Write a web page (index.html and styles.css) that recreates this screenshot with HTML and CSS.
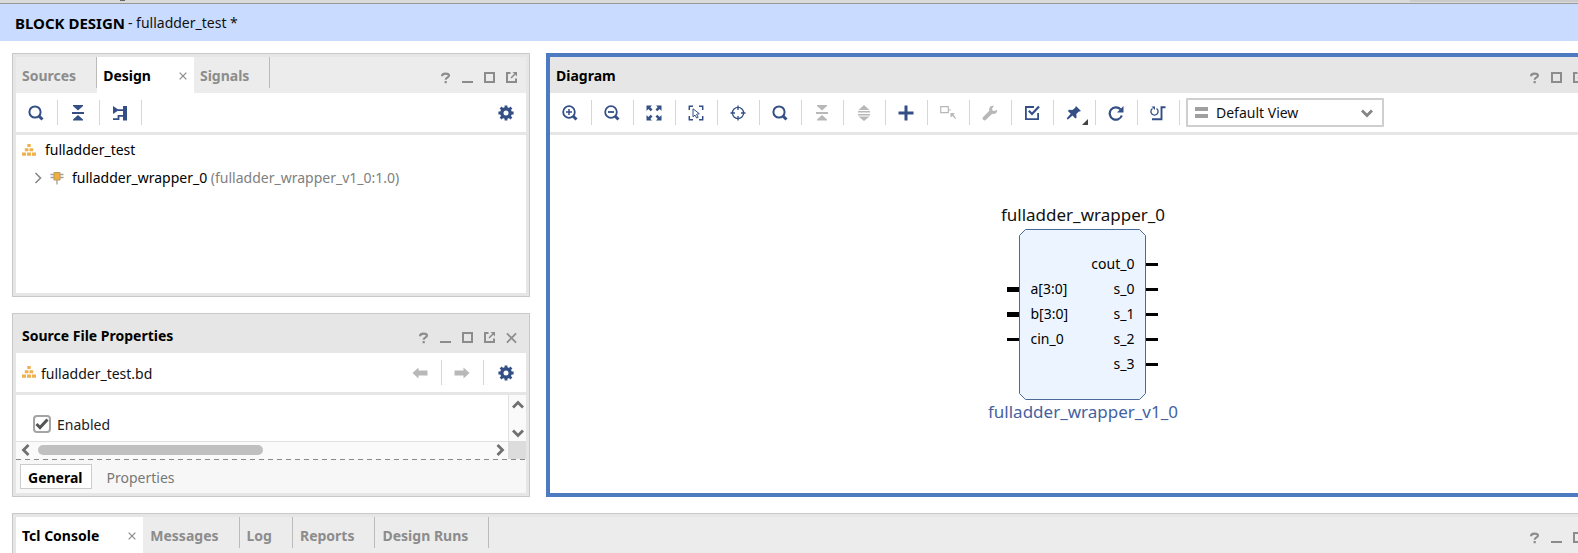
FILE: index.html
```html
<!DOCTYPE html>
<html lang="en">
<head>
<meta charset="utf-8">
<title>Block Design - fulladder_test</title>
<link rel="stylesheet" href="styles.css">
</head>
<body>
<svg class="defs" aria-hidden="true">
  <symbol id="i-help" viewBox="0 0 12 12"><path d="M2.200 4C2.200 1.800 4 1.200 6 1.200s3.800.7 3.800 2.400C9.800 5.500 6.200 5.300 6.200 8" fill="none" stroke="currentColor" stroke-width="2.300"/><path d="M5 9.300h2.400v2.400H5z" fill="currentColor"/></symbol>
  <symbol id="i-min" viewBox="0 0 11 12"><path d="M0 9h11v2H0z" fill="currentColor"/></symbol>
  <symbol id="i-max" viewBox="0 0 11 12"><path d="M1 1h9v9H1z" fill="none" stroke="currentColor" stroke-width="2"/></symbol>
  <symbol id="i-pop" viewBox="0 0 11 12"><path d="M4.500 1H1v9h9V6.500" fill="none" stroke="currentColor" stroke-width="2"/><path d="M5 6 9 2" stroke="currentColor" stroke-width="1.600"/><path d="M6.500 0H11V4.500z" fill="currentColor"/></symbol>
  <symbol id="i-close" viewBox="0 0 12 12"><path d="M1 1l10 10M11 1 1 11" fill="none" stroke="currentColor" stroke-width="1.900"/></symbol>
  <symbol id="i-search" viewBox="0 0 16 16"><circle cx="7" cy="7" r="5.600" fill="none" stroke="currentColor" stroke-width="2"/><path d="M11.200 11.200 14.500 14.500" stroke="currentColor" stroke-width="3"/></symbol>
  <symbol id="i-zin" viewBox="0 0 16 16"><circle cx="7" cy="7" r="5.800" fill="none" stroke="currentColor" stroke-width="1.800"/><path d="M11.200 11.200 14.500 14.500" stroke="currentColor" stroke-width="3"/><path d="M7 4v6M4 7h6" stroke="currentColor" stroke-width="1.500"/></symbol>
  <symbol id="i-zout" viewBox="0 0 16 16"><circle cx="7" cy="7" r="5.800" fill="none" stroke="currentColor" stroke-width="1.800"/><path d="M11.200 11.200 14.500 14.500" stroke="currentColor" stroke-width="3"/><path d="M4 7h6" stroke="currentColor" stroke-width="1.800"/></symbol>
  <symbol id="i-collapse" viewBox="0 0 16 16"><path d="M3 0h10v1L8 5.500 3 1zM2 7h12v2H2zM3 15.500v-1l5-4.500 5 4.500v1z" fill="currentColor"/></symbol>
  <symbol id="i-expand" viewBox="0 0 16 16"><path d="M8 0 13.500 5h-11zM2 6h12v1.600H2zM2 9h12v1.600H2zM2.500 11.500h11L8 16z" fill="currentColor"/></symbol>
  <symbol id="i-hier" viewBox="0 0 16 16"><path d="M1 1l6 4-6 4z" fill="currentColor"/><path d="M6 5.200h5M1 14.200h5.500v-3.400H11" fill="none" stroke="currentColor" stroke-width="1.800"/><path d="M11 1h4v14.500h-4z" fill="currentColor"/></symbol>
  <symbol id="i-gear" viewBox="0 0 16 16"><circle cx="8" cy="8" r="4.200" fill="none" stroke="currentColor" stroke-width="3.400"/><path d="M8 .4v3M8 12.600v3M.4 8h3M12.600 8h3M2.600 2.600l2 2M11.400 11.400l2 2M2.600 13.400l2-2M11.400 4.600l2-2" stroke="currentColor" stroke-width="2.800"/></symbol>
  <symbol id="i-fit" viewBox="0 0 16 16"><path d="M.5.5H6L4.300 2.300l2.200 2.200-1.800 1.800-2.300-2.200L.5 6zM15.500.5V6l-1.900-1.900-2.300 2.200-1.800-1.800 2.200-2.200L10 .5zM.5 15.500V10l1.900 1.900 2.300-2.200 1.800 1.800-2.200 2.200L6 15.500zM15.500 15.500H10l1.700-1.800-2.200-2.200 1.800-1.800 2.300 2.200 1.900-1.900z" fill="currentColor"/></symbol>
  <symbol id="i-area" viewBox="0 0 16 16"><path d="M1.300 5V1.300H5M11 1.300h3.700V5M1.300 11v3.700H5M11 14.700h3.700V11" fill="none" stroke="currentColor" stroke-width="1.500"/><path d="M5 3.800v8l2-1.700 1.700 3 1.500-.8-1.600-3 2.700-.6z" fill="none" stroke="currentColor" stroke-width="1"/></symbol>
  <symbol id="i-target" viewBox="0 0 16 16"><circle cx="8" cy="8" r="5.600" fill="none" stroke="currentColor" stroke-width="1.300"/><path d="M8 .5v4.500M8 11v4.500M.5 8h4.500M11 8h4.500" stroke="currentColor" stroke-width="1.300"/></symbol>
  <symbol id="i-plus" viewBox="0 0 16 16"><path d="M6.500.5h3v6h6v3h-6v6h-3v-6h-6v-3h6z" fill="currentColor"/></symbol>
  <symbol id="i-conn" viewBox="0 0 16 16"><path d="M.7 1.700h7.600v6H.7zM8.300 5H11" fill="none" stroke="currentColor" stroke-width="1.200"/><path d="M10.500 8h4.500l-1.500 1.500 2.300 3.500v1.500l-3.300-3.500-2 1.500z" fill="currentColor"/></symbol>
  <symbol id="i-wrench" viewBox="0 0 16 16"><path d="M15 4.800 12.600 6 10.500 5.500 10 3.500 12 1C9.500-.2 6.300 2 7.300 5.800L.9 12.200c-1.400 1.600 1.200 4.200 2.800 2.800l6.500-6.300c3 .9 5.500-1.200 4.800-3.900z" fill="currentColor"/></symbol>
  <symbol id="i-valid" viewBox="0 0 16 16"><path d="M10 2H1.900v12.200h12.200V8" fill="none" stroke="currentColor" stroke-width="1.800"/><path d="M4.800 5.800 8 9 15 1.500" fill="none" stroke="currentColor" stroke-width="2.200"/></symbol>
  <symbol id="i-pin" viewBox="0 0 16 16"><path d="M10 1l5 5-1.300.6-.8-.2-2.600 2.600.3 3.500-1.200 1-2.900-2.900-4.600 3.900-.9-.4-.2-.8 3.900-4.600L1.900 5.900l1-1.200 3.500.3L9 2.900z" fill="currentColor"/></symbol>
  <symbol id="i-refresh" viewBox="0 0 16 16"><path d="M12.500 4.300A6.200 6.200 0 1 0 13.800 10.500" fill="none" stroke="currentColor" stroke-width="2.200"/><path d="M15.500 1v6.500H9z" fill="currentColor"/></symbol>
  <symbol id="i-regen" viewBox="0 0 16 16"><path d="M6.500 3.500A3.600 3.600 0 1 1 2.500 3.500" fill="none" stroke="currentColor" stroke-width="1.300"/><path d="M1.500 1.500H5v3.500z" fill="currentColor"/><path d="M2 14.200h9.500V2.200H15.500" fill="none" stroke="currentColor" stroke-width="1.900"/></symbol>
  <symbol id="i-left" viewBox="0 0 16 16"><path d="M.5 8 6.500 2.500V5.500h9v5h-9v3z" fill="currentColor"/></symbol>
  <symbol id="i-right" viewBox="0 0 16 16"><path d="M15.500 8 9.500 2.500V5.500h-9v5h9v3z" fill="currentColor"/></symbol>
  <symbol id="i-design" viewBox="0 0 14 12"><path d="M5.300 0h3.400v3H5.300zM2.800 4.300h3.700v3H2.800zM7.500 4.300h3.700v3H7.500zM0 8.500h4v3.200H0zM5 8.500h4v3.200H5zM10 8.500h4v3.200h-4z" fill="currentColor"/></symbol>
  <symbol id="i-chip" viewBox="0 0 14 14"><path d="M.5 3.500h13M.5 6.500h13M7 9v4.500" stroke="#a0a0a0" stroke-width="1.300"/><path d="M4 1.500h6v7.500H4z" fill="#f3af35" stroke="#b59a66"/></symbol>
  <symbol id="i-chev" viewBox="0 0 14 14"><path d="M2 4.500l5 5 5-5" fill="none" stroke="currentColor" stroke-width="2.800"/></symbol>
</svg>

<div class="strip"><span class="strip-mark"></span><span class="strip-end"></span></div>
<header class="title-bar"><h1>BLOCK DESIGN</h1><span>- fulladder_test *</span></header>

<main class="workspace">
  <div class="side">
    <section class="panel panel-design">
      <div class="panel-head tabs-head">
        <div class="tabs" role="tablist">
          <button class="tab" role="tab">Sources</button>
          <div class="tab-on"><button class="tab-label" role="tab" aria-selected="true">Design</button><button class="tab-x" aria-label="Close"><svg><use href="#i-close"/></svg></button></div>
          <button class="tab" role="tab">Signals</button>
        </div>
        <div class="win-tools">
          <button aria-label="Help"><svg><use href="#i-help"/></svg></button>
          <button aria-label="Minimize"><svg><use href="#i-min"/></svg></button>
          <button aria-label="Maximize"><svg><use href="#i-max"/></svg></button>
          <button aria-label="Float"><svg><use href="#i-pop"/></svg></button>
        </div>
      </div>
      <div class="toolbar">
        <button class="tool" aria-label="Search"><svg><use href="#i-search"/></svg></button>
        <button class="tool" aria-label="Collapse all"><svg><use href="#i-collapse"/></svg></button>
        <button class="tool" aria-label="Hierarchy"><svg><use href="#i-hier"/></svg></button>
        <span class="grow"></span>
        <button class="tool last" aria-label="Settings"><svg><use href="#i-gear"/></svg></button>
      </div>
      <ul class="tree">
        <li class="tree-row"><svg class="design-icon"><use href="#i-design"/></svg><span>fulladder_test</span></li>
        <li class="tree-row child"><svg class="twist" viewBox="0 0 8 12"><path d="M1.500 1 6.500 6 1.500 11" fill="none" stroke="currentColor" stroke-width="1.600"/></svg><svg class="chip-icon"><use href="#i-chip"/></svg><span>fulladder_wrapper_0 <span class="muted">(fulladder_wrapper_v1_0:1.0)</span></span></li>
      </ul>
    </section>

    <section class="panel panel-props">
      <div class="panel-head">
        <h2>Source File Properties</h2>
        <div class="win-tools">
          <button aria-label="Help"><svg><use href="#i-help"/></svg></button>
          <button aria-label="Minimize"><svg><use href="#i-min"/></svg></button>
          <button aria-label="Maximize"><svg><use href="#i-max"/></svg></button>
          <button aria-label="Float"><svg><use href="#i-pop"/></svg></button>
          <button aria-label="Close"><svg><use href="#i-close"/></svg></button>
        </div>
      </div>
      <div class="toolbar">
        <div class="file-name"><svg class="design-icon"><use href="#i-design"/></svg><span>fulladder_test.bd</span></div>
        <span class="grow"></span>
        <button class="tool" aria-label="Back" disabled><svg><use href="#i-left"/></svg></button>
        <button class="tool" aria-label="Forward" disabled><svg><use href="#i-right"/></svg></button>
        <button class="tool last" aria-label="Settings"><svg><use href="#i-gear"/></svg></button>
      </div>
      <div class="scroll-area">
        <div class="props-body">
          <label class="check"><input type="checkbox" checked><svg viewBox="0 0 14 12"><path d="M1.500 6 5 9.500 12.500 1.500" fill="none" stroke="currentColor" stroke-width="3"/></svg><span>Enabled</span></label>
        </div>
        <div class="vbar"><button aria-label="Scroll up"><svg class="flip"><use href="#i-chev"/></svg></button><button aria-label="Scroll down"><svg><use href="#i-chev"/></svg></button></div>
        <div class="hbar"><button aria-label="Scroll left"><svg class="turn-left"><use href="#i-chev"/></svg></button><div class="track"><div class="thumb"></div></div><button aria-label="Scroll right"><svg class="turn-right"><use href="#i-chev"/></svg></button></div>
        <div class="corner"></div>
      </div>
      <div class="foot-tabs"><button class="foot-tab on">General</button><button class="foot-tab">Properties</button></div>
    </section>
  </div>

  <section class="panel panel-diagram">
    <div class="panel-head">
      <h2>Diagram</h2>
      <div class="win-tools">
        <button aria-label="Help"><svg><use href="#i-help"/></svg></button>
        <button aria-label="Maximize"><svg><use href="#i-max"/></svg></button>
        <button aria-label="Float"><svg><use href="#i-pop"/></svg></button>
        <button aria-label="Close"><svg><use href="#i-close"/></svg></button>
      </div>
    </div>
    <div class="toolbar">
      <button class="tool" aria-label="Zoom in"><svg><use href="#i-zin"/></svg></button>
      <button class="tool" aria-label="Zoom out"><svg><use href="#i-zout"/></svg></button>
      <button class="tool" aria-label="Zoom fit"><svg><use href="#i-fit"/></svg></button>
      <button class="tool" aria-label="Select area"><svg><use href="#i-area"/></svg></button>
      <button class="tool" aria-label="Center"><svg><use href="#i-target"/></svg></button>
      <button class="tool" aria-label="Search"><svg><use href="#i-search"/></svg></button>
      <button class="tool" aria-label="Collapse all" disabled><svg><use href="#i-collapse"/></svg></button>
      <button class="tool" aria-label="Expand all" disabled><svg><use href="#i-expand"/></svg></button>
      <button class="tool" aria-label="Add IP"><svg><use href="#i-plus"/></svg></button>
      <button class="tool" aria-label="Make connection" disabled><svg><use href="#i-conn"/></svg></button>
      <button class="tool" aria-label="Customize" disabled><svg><use href="#i-wrench"/></svg></button>
      <button class="tool" aria-label="Validate design"><svg><use href="#i-valid"/></svg></button>
      <button class="tool has-menu" aria-label="Pin"><svg><use href="#i-pin"/></svg></button>
      <button class="tool" aria-label="Refresh"><svg><use href="#i-refresh"/></svg></button>
      <button class="tool" aria-label="Regenerate layout"><svg><use href="#i-regen"/></svg></button>
      <div class="view-pick">
        <svg class="view-bars" viewBox="0 0 13 12"><path d="M0 0h13v4H0zM0 7h13v4H0z" fill="currentColor"/></svg>
        <select aria-label="View"><option>Default View</option></select>
        <svg class="view-arrow"><use href="#i-chev"/></svg>
      </div>
    </div>
    <div class="canvas">
      <div class="node">
        <div class="node-name">fulladder_wrapper_0</div>
        <div class="node-box">
          <svg class="node-shape" viewBox="0 0 127 171"><path d="M6.500.5h114l6 6v158l-6 6H6.500l-6-6V6.500z" fill="#ecf5ff" stroke="#4a6a9c"/></svg>
          <ul class="ports in">
            <li class="bus">a[3:0]</li><li class="bus">b[3:0]</li><li>cin_0</li>
          </ul>
          <ul class="ports out">
            <li>cout_0</li><li>s_0</li><li>s_1</li><li>s_2</li><li>s_3</li>
          </ul>
        </div>
        <div class="node-type">fulladder_wrapper_v1_0</div>
      </div>
    </div>
  </section>

  <section class="panel panel-console">
    <div class="panel-head tabs-head">
      <div class="tabs" role="tablist">
        <div class="tab-on"><button class="tab-label" role="tab" aria-selected="true">Tcl Console</button><button class="tab-x" aria-label="Close"><svg><use href="#i-close"/></svg></button></div>
        <button class="tab" role="tab">Messages</button>
        <button class="tab" role="tab">Log</button>
        <button class="tab" role="tab">Reports</button>
        <button class="tab" role="tab">Design Runs</button>
      </div>
      <div class="win-tools">
        <button aria-label="Help"><svg><use href="#i-help"/></svg></button>
        <button aria-label="Minimize"><svg><use href="#i-min"/></svg></button>
        <button aria-label="Maximize"><svg><use href="#i-max"/></svg></button>
        <button aria-label="Float"><svg><use href="#i-pop"/></svg></button>
      </div>
    </div>
  </section>
</main>
</body>
</html>
```
FILE: styles.css
```css
* { box-sizing: border-box; }
body {
  margin: 0;
  min-height: 100vh;
  overflow: hidden;
  background: #fff;
  color: #111;
  font: 14px/20px "Noto Sans", "Open Sans", sans-serif;
}
h1, h2, ul { margin: 0; padding: 0; font-size: 14px; list-style: none; color: #000; }
button {
  border: 0;
  padding: 0;
  background: none;
  font: inherit;
  color: inherit;
}
svg { display: block; flex: none; }
.defs { position: absolute; width: 0; height: 0; }
.grow { flex: 1; }
.muted { color: #808080; }

.strip {
  display: flex;
  justify-content: space-between;
  height: 4px;
  padding-left: 120px;
  background: #dadada;
  border-bottom: 1px solid #999;
}
.strip-mark { width: 5px; height: 1px; background: #666; }
.strip-end { width: 168px; height: 2px; background: #cacaca; }
.title-bar {
  display: flex;
  align-items: center;
  gap: 3px;
  height: 37px;
  padding-left: 15px;
  background: #c9dcff;
}
.title-bar h1 { font-size: 15px; }

/* The workspace runs past the right edge of the window. */
.workspace {
  display: grid;
  grid-template-columns: minmax(0, 518fr) minmax(0, 1072fr);
  gap: 16px;
  width: calc(100% + 40px);
  padding: 12px 0 0 12px;
}
.side { display: flex; flex-direction: column; gap: 16px; }
.panel {
  display: flex;
  flex-direction: column;
  border: 1px solid #c9c9c9;
  outline: 3px solid #e6e6e6;
  outline-offset: -4px;
  padding: 3px;
  background: #fff;
}
.panel-diagram { border: 4px solid #4d7bc1; outline: 0; padding: 0; }
.panel-console { grid-column: 1 / -1; min-height: 60px; }
.panel-head {
  display: flex;
  justify-content: space-between;
  align-items: center;
  height: 36px;
  padding: 2px 0 0 6px;
  background: #e6e6e6;
}
.tabs-head { background: #ececec; padding: 0; }
.tabs { display: flex; height: 36px; }
.tab {
  height: 31px;
  padding: 6px 20px 0 6px;
  border-right: 1px solid #bbb;
  font-weight: 700;
  color: #8c8c8c;
}
.panel-console .tab { padding-left: 7px; }
.tab-on {
  display: flex;
  align-items: center;
  gap: 28px;
  padding: 2px 7px 0 6px;
  background: #fff;
  color: #000;
  font-weight: 700;
}
.panel-console .tab-on { gap: 29px; }
.tab-x { color: #8c8c8c; }
.tab-x svg { width: 8px; height: 8px; }
.win-tools {
  display: flex;
  gap: 11px;
  padding: 4px 9px 0 0;
  color: #8c8c8c;
}
.win-tools svg { width: 11px; height: 12px; }
.tabs-head .win-tools { padding-top: 6px; }
.panel-diagram .win-tools, .panel-console .win-tools { padding-right: 8px; }

.toolbar {
  display: flex;
  align-items: center;
  height: 42px;
  border-bottom: 3px solid #e6e6e6;
}
.tool {
  position: relative;
  display: flex;
  align-items: center;
  justify-content: center;
  width: 42px;
  height: 25px;
  padding-right: 1px;
  border-right: 1px solid #d6d6d6;
  color: #334f86;
}
.tool.last { border-right: 0; padding-left: 1px; padding-right: 0; }
.tool:disabled { color: #b8b8b8; }
.tool svg { width: 16px; height: 16px; }
.has-menu::after {
  content: "";
  position: absolute;
  right: 7px;
  bottom: 0;
  border: 3px solid;
  border-color: transparent #444 #444 transparent;
}
.view-pick { position: relative; margin-left: 6px; color: #848484; }
.view-pick select {
  appearance: none;
  width: 198px;
  height: 29px;
  padding: 0 28px 0 28px;
  border: 2px solid #cfcfcf;
  border-radius: 1px;
  background: #fff;
  color: #111;
  font: inherit;
}
.view-bars { position: absolute; left: 9px; top: 9px; width: 13px; height: 12px; color: #a0a0a0; }
.view-arrow { position: absolute; right: 10px; top: 8px; width: 14px; height: 14px; }

.tree { min-height: 158px; padding: 1px 6px; }
.tree-row { display: flex; align-items: center; height: 28px; gap: 9px; color: #000; }
.tree-row.child { padding-left: 12px; gap: 8px; }
.twist { width: 8px; height: 12px; color: #888; }
.design-icon { width: 14px; height: 12px; color: #efb04e; }
.chip-icon { width: 14px; height: 14px; }

.file-name { display: flex; align-items: center; gap: 5px; padding: 2px 0 0 6px; }
.file-name .design-icon { margin-bottom: 4px; }
.scroll-area { display: grid; grid-template-columns: 1fr 18px; grid-template-rows: 46px 18px; }
.props-body { padding: 18px 0 0 17px; }
.check { position: relative; display: flex; align-items: center; gap: 6px; color: #222; }
.check input {
  appearance: none;
  width: 18px;
  height: 18px;
  margin: 0;
  border: 2px solid #a4a4a4;
  border-radius: 4px;
  background: #fff;
}
.check span { padding-top: 2px; }
.check svg { position: absolute; left: 2px; top: 5px; width: 14px; height: 12px; color: #555; }
.vbar, .hbar { display: flex; justify-content: space-between; align-items: center; background: #fafafa; color: #707070; }
.vbar { flex-direction: column; padding: 3px 0 1px; border-left: 1px solid #e0e0e0; }
.hbar { padding: 0 1px 1px 3px; border-top: 1px solid #e0e0e0; }
.vbar svg, .hbar svg { width: 14px; height: 14px; }
.flip { transform: rotate(180deg); }
.turn-left { transform: rotate(90deg); }
.turn-right { transform: rotate(-90deg); }
.track { flex: 1; padding: 0 5px; }
.thumb { width: 50%; height: 10px; border-radius: 5px; background: #c0c0c0; }
.corner { background: #dcdcdc; }
.foot-tabs {
  display: flex;
  align-items: center;
  gap: 8px;
  height: 34px;
  padding: 1px 0 0 4px;
  background: repeating-linear-gradient(90deg, #888 0 5px, transparent 5px 9px) 0 0 / 100% 1px no-repeat #f7f7f7;
}
.foot-tab { height: 25px; padding: 2px 8px 0 7px; color: #777; }
.foot-tab.on { border: 1px solid #ccc; background: #fff; color: #000; font-weight: 700; }

.canvas { flex: 1; display: flex; align-items: center; justify-content: center; padding-left: 2px; }
.node { display: flex; flex-direction: column; align-items: center; font-size: 17px; line-height: 24px; }
.node-name { padding-bottom: 2px; }
.node-type { padding-bottom: 2px; color: #45629f; }
.node-box {
  position: relative;
  display: flex;
  justify-content: space-between;
  width: 127px;
  height: 171px;
  padding: 22px 12px 0 11px;
  font-size: 14px;
  line-height: 25px;
}
.node-shape { position: absolute; left: 0; top: 0; width: 127px; height: 171px; }
.ports { position: relative; }
.ports li { position: relative; }
.ports.in { padding-top: 25px; }
.ports.out { text-align: right; }
.ports li::after {
  content: "";
  position: absolute;
  top: 12px;
  width: 12px;
  height: 3px;
  background: #000;
}
.ports.in li::after { right: 100%; margin-right: 11px; }
.ports.out li::after { left: 100%; margin-left: 12px; }
.ports.in .bus::after { top: 11px; height: 5px; }
```
